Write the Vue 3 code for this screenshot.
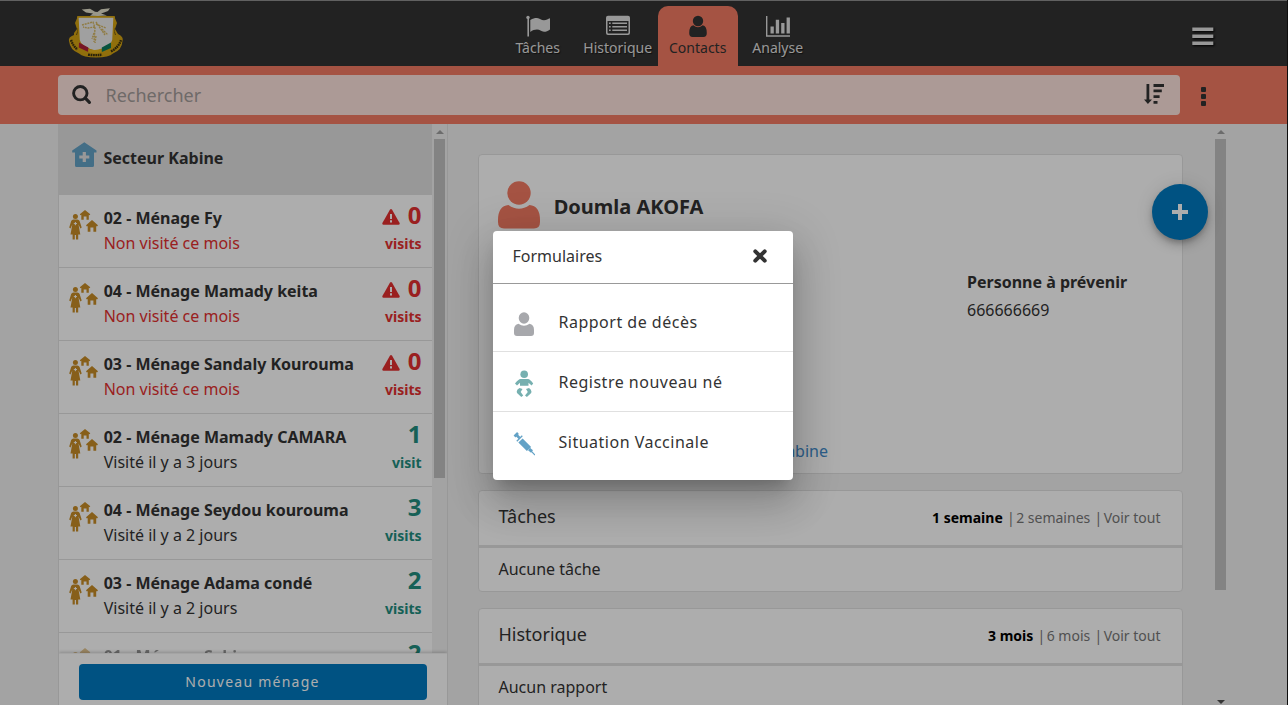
<script setup>
const households = [
  { name: '02 - Ménage Fy', note: 'Non visité ce mois', count: 0, late: true },
  { name: '04 - Ménage Mamady keita', note: 'Non visité ce mois', count: 0, late: true },
  { name: '03 - Ménage Sandaly Kourouma', note: 'Non visité ce mois', count: 0, late: true },
  { name: '02 - Ménage Mamady CAMARA', note: 'Visité il y a 3 jours', count: 1 },
  { name: '04 - Ménage Seydou kourouma', note: 'Visité il y a 2 jours', count: 3 },
  { name: '03 - Ménage Adama condé', note: 'Visité il y a 2 jours', count: 2 },
  { name: '01 - Ménage Sekine', count: 2, faded: true },
]
const panels = [
  { title: 'Tâches', filters: ['1 semaine', '2 semaines', 'Voir tout'], empty: 'Aucune tâche' },
  { title: 'Historique', filters: ['3 mois', '6 mois', 'Voir tout'], empty: 'Aucun rapport' },
]
</script>

<template>
  <div class="app">
    <header class="header">
      <svg class="logo" width="56" height="52" viewBox="0 0 56 52">
        <path d="M6 25 L9 21 L7 15 L10 8 H46 L49 15 L47 21 L50 26 Q56 29 54.500 33 Q54 42 45 45.500 Q41 49.500 28 49.500 Q15 49.500 11 45.500 Q2 42 1 33 Q0 29 6 27Z" fill="#d5a412" />
        <path d="M8.500 27 Q10 24 10 20 M47.500 27 Q46 24 46 20" fill="none" stroke="#6f540c" stroke-width="1" />
        <path d="M9.800 9 H46.200 L45 32 Q44 39 28 43.500 Q12 39 11 32Z" fill="#ececec" stroke="#d5a412" stroke-width="1.600" />
        <path d="M11 34.500 L20.300 39.500 V44 L10.800 39.500Z" fill="#b01f37" />
        <path d="M20.300 41 Q28 43 33.800 40.500 V44 Q27 46 20.300 44Z" fill="#e9b51c" />
        <path d="M33.800 39.500 L43 34.500 V40 L33.800 44Z" fill="#0d7d5c" />
        <path d="M14 17 L25 14 L27 20 L26 34 M28 14 L37 27 M27 19 L20 20 L15 19 M28 16 L38 20 M26 25 L24 31 M28 28 L27 35 M34 21 L40 27" fill="none" stroke="#d4b765" stroke-width="1.400" stroke-dasharray="2 .8" />
        <path d="M13.700 1.500 L22 .8 L27 3.800 L29.500 4 L33 1.200 L42 .3 L40 3 L36 4.500 L33 5.500 L39 7.500 L30 8 L22 7.800 L25 5.500 L18 4.500Z" fill="#e4e1cc" />
        <path d="M3 32 Q5 38 9.500 41.500 M20 46.700 Q28 47.600 34 46.700 M43 43.500 Q51 39 53 32" fill="none" stroke="#3d3210" stroke-width="2.400" stroke-dasharray="1.700 .6" />
      </svg>
      <nav class="tabs">
        <a class="tab">
          <svg width="24" height="22" viewBox="0 0 24 22" fill="currentColor"><circle cx="2" cy="2.400" r="1.700" /><path d="M1.400 3H3V21.500H1.400ZM4.300 5C7 3.400 9 2.900 11 3C14 3.200 15 5.200 18 5.200C20.500 5.200 22 3.900 24 3.200V14.400C22 15.600 20 16.800 18 16.800C15 16.800 14 14.600 11 14.600C8.500 14.600 6.500 15.400 4.300 17Z" /></svg>
          <span>Tâches</span>
        </a>
        <a class="tab">
          <svg width="24" height="22" viewBox="0 0 24 22" fill="currentColor"><path fill-rule="evenodd" d="M2 .8H22Q24 .8 24 2.800V18Q24 20 22 20H2Q0 20 0 18V2.800Q0 .8 2 .8ZM1.500 6V17.600Q1.500 18.500 2.400 18.500H21.600Q22.500 18.500 22.500 17.600V6Z" /><path d="M3 7.500H4.700V9.100H3ZM6.300 7.500H21V9.100H6.300ZM3 11H4.700V12.600H3ZM6.300 11H21V12.600H6.300ZM3 14.500H4.700V16.100H3ZM6.300 14.500H21V16.100H6.300Z" /></svg>
          <span>Historique</span>
        </a>
        <a class="tab active">
          <svg width="18" height="22" viewBox="0 0 18 22" fill="currentColor"><ellipse cx="9" cy="6" rx="5.200" ry="5.300" /><path d="M4.300 10.300Q9 14 13.700 10.300Q17.800 11 17.800 18Q17.800 21.900 14.500 21.900H3.500Q.2 21.900 .2 18Q.2 11 4.300 10.300Z" /></svg>
          <span>Contacts</span>
        </a>
        <a class="tab">
          <svg width="24" height="22" viewBox="0 0 24 22" fill="currentColor"><path d="M0 1H1.400V20.200H24V21.700H0ZM4.500 11.500H7.800V18.500H4.500ZM9.800 4.700H13.100V18.500H9.800ZM15.200 8H18.500V18.500H15.200ZM20.600 2.600H23.900V18.500H20.600Z" /></svg>
          <span>Analyse</span>
        </a>
      </nav>
      <svg class="burger" width="22" height="19" viewBox="0 0 22 19"><path d="M.3 2.200H21.300M.3 9.200H21.300M.3 16.200H21.300" stroke="#e0e0e0" stroke-width="3.400" /></svg>
    </header>

    <div class="filters">
      <div class="search">
        <svg width="20" height="20" viewBox="0 0 20 20" fill="none" stroke="#333" stroke-linecap="round"><circle cx="8.300" cy="8.200" r="6.700" stroke-width="2.900" /><path d="M13.300 13.200L17.400 17.300" stroke-width="3.200" /></svg>
        <span class="placeholder">Rechercher</span>
        <svg class="sort" width="20" height="20" viewBox="0 0 20 20" fill="#333"><path d="M2.500 0H5.300V15.500H8L3.900 20L0 15.500H2.500ZM9.500 0H20V3H9.500ZM9.500 5.400H17.800V8.200H9.500ZM9.500 11.300H15.600V14H9.500ZM9.500 17H13.500V19.700H9.500Z" /></svg>
      </div>
      <div class="dots"><i></i><i></i><i></i></div>
    </div>

    <main class="content">
      <aside class="left">
        <div class="scroll">
          <div class="list">
            <div class="place">
              <svg width="25" height="26" viewBox="0 0 25 26"><path d="M12.300 .3L24.500 8.500V10.500H22V23.500Q22 25 20.500 25H4.500Q3 25 3 23.500V10.500H.2V8.500Z" fill="#63a2c6" /><path d="M12.300 10V20M7.300 15H17.300" stroke="#e1e1e1" stroke-width="3.200" /></svg>
              <b>Secteur Kabine</b>
            </div>
            <div v-for="h in households" :key="h.name" class="row" :class="{ late: h.late, faded: h.faded }">
              <svg class="family" width="29" height="30" viewBox="0 0 29 30" fill="#c88d27"><circle cx="6.400" cy="6.500" r="2.500" /><path d="M4.500 9.500H8.300Q10 9.500 10.600 11L12.700 17.500L11.400 18.400L9.500 14.500L11.300 24.500H9.200V29.500H7V25H5.800V29.500H3.600V24.500H1.500L3.300 14.500L1.500 18.400L.2 17.500L2.200 11Q2.800 9.500 4.500 9.500Z" /><path d="M16 0L21.300 4.200L20.500 5.200L19.800 4.800V9.800H17.500V6.500H14.700V9.800H12.300V4.800L11.500 5.200L10.800 4.200Z" /><path d="M23 10L29 15.300L28 16.400L27.200 16V21.800H24.400V17.600H21.400V21.800H18.700V16L17.900 16.400L17 15.300Z" /><path d="M6.400 12V15.200M4.800 13.600H8" stroke="#fff" stroke-width="1" /></svg>
              <div class="who"><b>{{ h.name }}</b><span v-if="h.note">{{ h.note }}</span></div>
              <div class="visits">
                <div class="num">
                  <svg v-if="h.late" width="18" height="16" viewBox="0 0 18 16"><path d="M7.900 .8Q9 -.7 10.100 .8L17.600 14Q18 15.700 16.500 15.800H1.500Q0 15.700 .4 14Z" fill="#e33030" /><path d="M9 5V10M9 11.300V13.400" stroke="#fff" stroke-width="2" /></svg>
                  <b>{{ h.count }}</b>
                </div>
                <b v-if="h.note" class="unit">{{ h.count === 1 ? 'visit' : 'visits' }}</b>
              </div>
            </div>
          </div>
          <div class="bar"><i class="up"></i><div class="thumb short"></div></div>
        </div>
        <div class="action"><button>Nouveau ménage</button></div>
      </aside>

      <section class="right">
        <div class="cards">
          <article class="card profile">
            <div class="title">
              <svg width="42" height="48" viewBox="0 0 42 48" fill="#f47b63"><circle cx="21" cy="12" r="11.700" /><path d="M10.500 24Q21 31.500 31.500 24Q42 25 42 39V41Q42 47.500 36 47.500H6Q0 47.500 0 41V39Q0 25 10.500 24Z" /></svg>
              <b>Doumla AKOFA</b>
            </div>
            <div class="fields"><div class="field"><b>Personne à prévenir</b><span>666666669</span></div></div>
            <a class="link">Secteur Kabine</a>
          </article>
          <article v-for="p in panels" :key="p.title" class="card panel">
            <div class="phead">
              <h3>{{ p.title }}</h3>
              <div class="pf"><b>{{ p.filters[0] }}</b><span>|</span><em>{{ p.filters[1] }}</em><span>|</span><em>{{ p.filters[2] }}</em></div>
            </div>
            <p>{{ p.empty }}</p>
          </article>
        </div>
        <div class="bar"><i class="up"></i><div class="thumb long"></div><i class="down"></i></div>
      </section>
    </main>

    <button class="fab"><svg width="16" height="16" viewBox="0 0 16 16"><path d="M8 0V16M0 8H16" stroke="#fff" stroke-width="4" /></svg></button>
    <div class="edge"></div>

    <div class="overlay">
      <div class="modal">
        <div class="mhead">
          <span>Formulaires</span>
          <svg width="14" height="14" viewBox="0 0 14 14"><path d="M2.300 2.300L11.700 11.700M11.700 2.300L2.300 11.700" stroke="#333" stroke-width="4" stroke-linecap="round" /></svg>
        </div>
        <div class="mbody">
          <a class="item">
            <svg width="22" height="28" viewBox="0 0 22 28" fill="#a7a8ac"><ellipse cx="11" cy="8" rx="5.300" ry="5.800" /><path d="M5.500 13.800Q11 17.800 16.500 13.800Q21 14.500 21 20V23Q21 26 18 26H4Q1 26 1 23V20Q1 14.500 5.500 13.800Z" /></svg>
            <span>Rapport de décès</span>
          </a>
          <a class="item">
            <svg width="22" height="28" viewBox="0 0 22 28" fill="#76b0b0"><circle cx="11.200" cy="4.200" r="3.800" /><path d="M7.500 9H15Q17 9 20.200 13.500L18.600 15.500L15.500 12.800V15.800H7V12.800L4 15.500L2 13.500Q5.500 9 7.500 9Z" /><path d="M6.500 18L9.500 19L7.700 22L10.200 25.500L8.300 27L4 23Q3.200 21.500 4.500 19.500ZM16 18L13 19L14.800 22L12 25.500L13.900 27L18.200 23Q19 21.500 17.700 19.500Z" /></svg>
            <span>Registre nouveau né</span>
          </a>
          <a class="item">
            <svg width="22" height="28" viewBox="0 0 22 28" fill="none" stroke="#63a2c6"><path d="M1.500 6.500L5 3M3.200 4.800L6.500 8" stroke-width="2.600" /><path d="M3.800 11.300L9.300 5.800" stroke-width="1.300" /><path d="M7.500 10.500L16 19" stroke-width="6" /><path d="M16 19L19 21.500" stroke-width="3" /><path d="M18 20.800L22 25" stroke-width="1.200" /></svg>
            <span>Situation Vaccinale</span>
          </a>
        </div>
      </div>
    </div>
  </div>
</template>

<style>
body { margin: 0; overflow: hidden; }
</style>

<style scoped>
* { box-sizing: border-box; }
.app { position: relative; width: 1288px; height: 705px; overflow: hidden; display: flex; flex-direction: column; background: #f0f0f0; color: #333; font: 16px/22px "Noto Sans", sans-serif; }
svg { display: block; flex: none; }
.header { flex: none; height: 66px; background: #333; border-top: 1px solid #909090; display: grid; grid-template-columns: 497.700px 320px 1fr; color: #e0e0e0; }
.logo { margin: 7px 0 0 68px; }
.tabs { display: flex; padding-top: 5px; }
.tab { width: 80px; height: 60px; display: flex; flex-direction: column; align-items: center; padding-top: 9px; font-size: 14px; line-height: 20px; text-shadow: 1px 1px 1px rgba(0, 0, 0, .6); }
.tab svg { margin-bottom: 1px; }
.tab.active { background: #f47b63; color: #333; border-radius: 10px 10px 0 0; text-shadow: none; }
.burger { margin: 26px 0 0 374.300px; filter: drop-shadow(1px 1px 1px #000); }
.filters { flex: none; height: 58px; background: #f47b63; display: flex; padding: 9px 0 0 58px; }
.search { width: 1122px; height: 40px; border-radius: 4px; background: #fee4de; display: flex; align-items: center; padding: 0 16px 0 14px; }
.placeholder { margin-left: 13.500px; font-size: 18px; color: #a49c9a; }
.sort { margin: -3px 0 0 auto; }
.dots { margin: 12px 0 0 21px; display: flex; flex-direction: column; gap: 2px; }
.dots i { width: 5px; height: 5px; border-radius: 1px; background: #333; }
.content { flex: 1; min-height: 0; display: flex; padding-left: 58px; }
.left { width: 390px; border: solid #e1e1e1; border-width: 0 1px; display: flex; flex-direction: column; }
.scroll { flex: none; height: 529px; display: flex; overflow: hidden; }
.list { width: 373px; background: #fff; }
.place { height: 70px; background: #e1e1e1; display: flex; align-items: center; padding-left: 12.500px; gap: 7px; }
.place svg { margin-top: -9px; }
.place b { margin-top: -2px; }
.row { height: 73px; border-top: 1px solid #e1e1e1; display: flex; padding: 0 10.500px 0 10px; }
.family { margin-top: 15px; }
.who { margin: 11px 0 0 5.700px; display: flex; flex-direction: column; line-height: 25px; white-space: nowrap; }
.late .who span { color: #e33030; }
.visits { margin-left: auto; text-align: right; color: #218e7f; }
.late .visits { color: #e33030; }
.num { height: 36px; margin-top: 3px; padding-bottom: 2px; display: flex; justify-content: flex-end; align-items: center; gap: 8px; font-size: 24px; line-height: 34px; }
.num svg { margin-top: 3px; }
.unit { display: block; font-size: 14px; line-height: 20px; }
.faded .family, .faded .who { opacity: .5; }
.bar { position: relative; width: 15px; display: flex; flex-direction: column; align-items: center; padding-top: 6px; }
.up, .down { border: solid transparent; border-width: 0 4px 4px; border-bottom-color: #a0a0a0; }
.down { border-width: 4px 4px 0; border-top-color: #505050; margin-top: 110px; }
.thumb { width: 11px; margin-top: 5px; background: #c1c1c1; flex: none; }
.short { height: 339px; }
.long { height: 451px; }
.action { flex: 1; position: relative; background: #fff; border-top: 1px solid #f2f2f2; box-shadow: 0 -1px 3px rgba(0, 0, 0, .2); clip-path: inset(-5px 0 0 0); padding: 10px 20px; }
.action button { display: block; width: 348px; height: 36px; border: 0; border-radius: 4px; background: #007ac0; color: #fff; font: 14px/36px "Noto Sans", sans-serif; letter-spacing: 1.250px; padding: 0 1px 0 0; }
.right { width: 840px; display: flex; justify-content: space-between; padding-right: 60px; }
.cards { width: 735px; padding: 30px 0 0 30px; flex: none; }
.card { border: 1px solid #e1e1e1; border-radius: 4px; background: #fff; margin-bottom: 16px; }
.profile { height: 320px; padding: 26px 19px 0 19px; }
.title { display: flex; align-items: center; gap: 13.700px; font-size: 20px; line-height: 28px; }
.title b { margin-top: 4px; }
.fields { display: grid; grid-template-columns: 469px 1fr; height: 210px; padding-top: 38.500px; }
.field { grid-column: 2; display: flex; flex-direction: column; line-height: 28px; }
.link { display: block; width: 330px; margin-top: .5px; text-align: right; color: #428bca; }
.panel { height: 102px; }
.phead { height: 57px; border-bottom: 3px solid #e1e1e1; display: flex; justify-content: space-between; align-items: center; padding: 0 21.500px 0 19.500px; }
h3 { margin: -5px 0 0; font-size: 18px; font-weight: 400; }
.pf { display: flex; font-size: 14px; color: #777; }
.pf b { color: #000; }
.pf span { margin: 0 1.500px 0 4.200px; }
.pf em { font-style: normal; }
.panel p { margin: 0; padding: 10px 19.500px; }
.fab { position: absolute; left: 1152px; top: 184px; width: 56px; height: 56px; padding: 0; border: 0; border-radius: 50%; background: #007ac0; display: grid; place-items: center; box-shadow: 0 3px 5px -1px rgba(0, 0, 0, .2), 0 6px 10px rgba(0, 0, 0, .14), 0 1px 18px rgba(0, 0, 0, .12); }
.fab svg { margin-top: -1px; }
.edge { position: absolute; top: 0; right: 0; width: 1px; height: 705px; background: #151515; }
.overlay { position: absolute; inset: 0; background: rgba(0, 0, 0, .32); padding: 231px 0 0 493px; }
.modal { width: 300px; height: 249px; border-radius: 4px; background: #fff; box-shadow: 0 11px 15px -7px rgba(0, 0, 0, .2), 0 24px 38px 3px rgba(0, 0, 0, .14), 0 9px 46px 8px rgba(0, 0, 0, .12); }
.mhead { height: 53px; border-bottom: 1px solid #999; display: flex; justify-content: space-between; align-items: center; padding: 0 26px 1.500px 19.500px; }
.mbody { padding-top: 8px; }
.item { height: 60px; display: flex; align-items: center; padding-left: 20px; gap: 23.500px; letter-spacing: .5px; border-bottom: 1px solid #e0e0e0; }
.item:last-child { border-bottom-color: transparent; }
.item svg { margin-top: 4px; }
.item span { padding-top: 1px; }
</style>
